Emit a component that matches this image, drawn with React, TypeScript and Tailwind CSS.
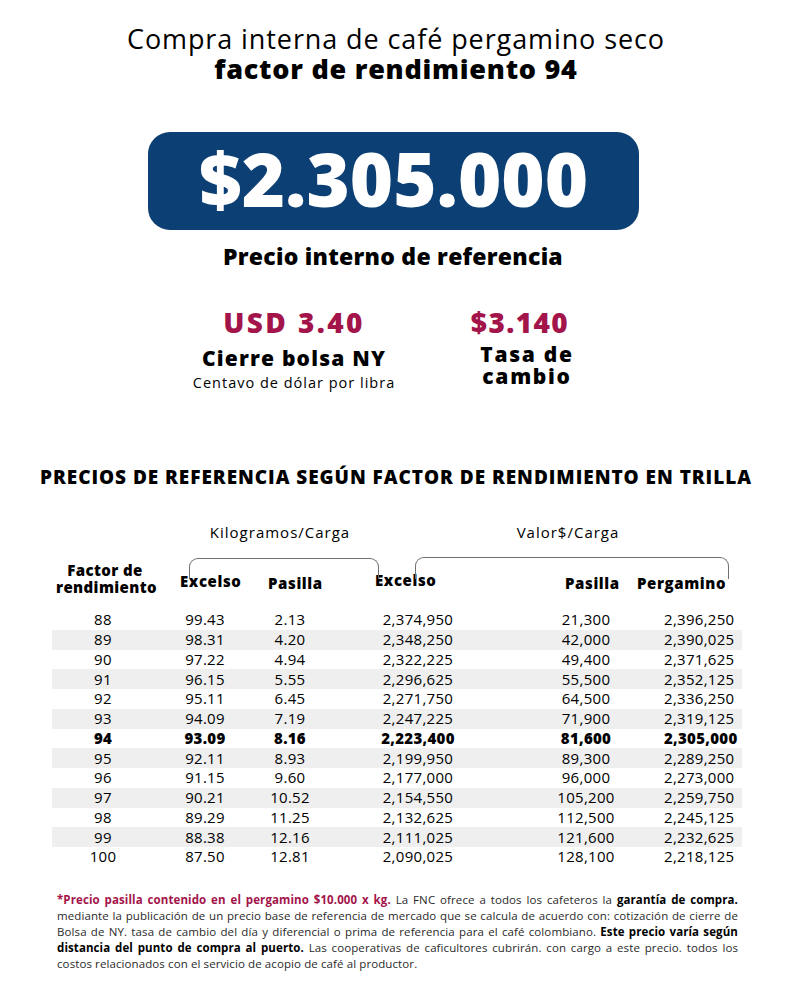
import React from "react";

type Row = [string, string, string, string, string, string];

const rows: Row[] = [
  ["88", "99.43", "2.13", "2,374,950", "21,300", "2,396,250"],
  ["89", "98.31", "4.20", "2,348,250", "42,000", "2,390,025"],
  ["90", "97.22", "4.94", "2,322,225", "49,400", "2,371,625"],
  ["91", "96.15", "5.55", "2,296,625", "55,500", "2,352,125"],
  ["92", "95.11", "6.45", "2,271,750", "64,500", "2,336,250"],
  ["93", "94.09", "7.19", "2,247,225", "71,900", "2,319,125"],
  ["94", "93.09", "8.16", "2,223,400", "81,600", "2,305,000"],
  ["95", "92.11", "8.93", "2,199,950", "89,300", "2,289,250"],
  ["96", "91.15", "9.60", "2,177,000", "96,000", "2,273,000"],
  ["97", "90.21", "10.52", "2,154,550", "105,200", "2,259,750"],
  ["98", "89.29", "11.25", "2,132,625", "112,500", "2,245,125"],
  ["99", "88.38", "12.16", "2,111,025", "121,600", "2,232,625"],
  ["100", "87.50", "12.81", "2,090,025", "128,100", "2,218,125"],
];

const cols = "grid grid-cols-[102px_102px_68px_188px_152px_78px]";
const line = "whitespace-nowrap text-justify [text-align-last:justify]";

function App() {
  return (
    <div className="w-[800px] min-h-[985px] bg-white text-black font-['Open_Sans',sans-serif]">
      {/* titulo */}
      <div className="pt-[24px] text-center text-[27px] leading-[30px] ml-[-8px]">
        <div className="tracking-[0.9px]">Compra interna de café pergamino seco</div>
        <div className="font-extrabold tracking-[0.75px]">factor de rendimiento 94</div>
      </div>

      {/* precio */}
      <div className="mt-[48px] ml-[148px] w-[491px] h-[98px] rounded-[22px] bg-[#0c3f73] flex items-center justify-center">
        <span className="text-white font-extrabold text-[74px] leading-none mt-[-4px]">$2.305.000</span>
      </div>
      <div className="mt-[12px] text-center font-extrabold text-[23px] leading-[28px] tracking-[0.25px] ml-[-14px]">
        Precio interno de referencia
      </div>

      {/* bolsa y tasa */}
      <div className="mt-[36px] flex">
        <div className="ml-[184px] w-[220px] flex flex-col items-center">
          <div className="text-[#a3154a] font-extrabold text-[28px] leading-[32px] tracking-[2.4px]">USD 3.40</div>
          <div className="mt-[7px] font-extrabold text-[21px] leading-[26px] tracking-[1.2px]">Cierre bolsa NY</div>
          <div className="mt-[3px] text-[14.5px] leading-[18px] tracking-[1px]">Centavo de dólar por libra</div>
        </div>
        <div className="ml-[56px] w-[120px] flex flex-col items-center">
          <div className="text-[#a3154a] font-extrabold text-[28px] leading-[32px] tracking-[1.4px]">$3.140</div>
          <div className="mt-[5px] ml-[14px] font-extrabold text-[21px] leading-[22px] tracking-[1.7px] text-center">
            Tasa de
            <br />
            cambio
          </div>
        </div>
      </div>

      {/* tabla */}
      <div className="mt-[74px] text-center font-extrabold text-[19px] leading-[22px] tracking-[0.95px] ml-[-8px]">
        PRECIOS DE REFERENCIA SEGÚN FACTOR DE RENDIMIENTO EN TRILLA
      </div>

      <div className="mt-[35px] ml-[52px] w-[690px]">
        <div className="flex text-[15px] leading-[18px] tracking-[1px]">
          <div className="ml-[148px] w-[160px] text-center">Kilogramos/Carga</div>
          <div className="ml-[148px] w-[120px] text-center">Valor$/Carga</div>
        </div>

        <div className="relative mt-[15px] h-[40px]">
          <div className="absolute left-[137px] top-[2px] w-[190px] h-[21px] border-t-[1.5px] border-x-[1.5px] border-[#707070] rounded-t-[9px]" />
          <div className="absolute left-[363px] top-[1px] w-[314px] h-[22px] border-t-[1.5px] border-x-[1.5px] border-[#707070] rounded-t-[9px]" />
          <div className={`${cols} font-extrabold text-[15px] leading-[17px] tracking-[0.6px] h-full whitespace-nowrap`}>
            <div className="text-center self-end pl-[4px] tracking-[0.4px]">
              Factor de
              <br />
              rendimiento
            </div>
            <div className="self-end mb-[6px] pl-[26px]">Excelso</div>
            <div className="self-end mb-[4px] pl-[12px]">Pasilla</div>
            <div className="self-end mb-[7px] ml-[51px]">Excelso</div>
            <div className="self-end mb-[4px] ml-[53px]">Pasilla</div>
            <div className="self-end mb-[4px] ml-[-27px]">Pergamino</div>
          </div>
        </div>

        <div className="mt-[14px] text-[15px] tracking-[0.3px]">
          {rows.map((r, i) => (
            <div
              key={r[0]}
              className={`${cols} h-[19.75px] items-center leading-[19px] ${i % 2 === 1 ? "bg-[#efefef]" : ""} ${r[0] === "94" ? "font-extrabold" : ""}`}
            >
              <div className="text-center">{r[0]}</div>
              <div className="text-center">{r[1]}</div>
              <div className="text-center">{r[2]}</div>
              <div className="text-center">{r[3]}</div>
              <div className="text-center pr-[4px]">{r[4]}</div>
              <div className="text-center pr-[12px]">{r[5]}</div>
            </div>
          ))}
        </div>
      </div>

      {/* nota */}
      <div className="mt-[25px] ml-[57px] w-[681px] text-[11.5px] leading-[16px] tracking-[0.1px] text-[#2a2a2a]">
        <div className={line}>
          <span className="font-bold text-[#a3154a]">*Precio pasilla contenido en el pergamino $10.000 x kg.</span> La
          FNC ofrece a todos los cafeteros la <span className="font-bold text-black">garantía de compra.</span>
        </div>
        <div className={line}>
          mediante la publicación de un precio base de referencia de mercado que se calcula de acuerdo con: cotización de
          cierre de
        </div>
        <div className={line}>
          Bolsa de NY. tasa de cambio del día y diferencial o prima de referencia para el café colombiano.{" "}
          <span className="font-bold text-black">Este precio varía según</span>
        </div>
        <div className={line}>
          <span className="font-bold text-black">distancia del punto de compra al puerto.</span> Las cooperativas de
          caficultores cubrirán. con cargo a este precio. todos los
        </div>
        <div className="whitespace-nowrap">costos relacionados con el servicio de acopio de café al productor.</div>
      </div>
    </div>
  );
}

export default App;
